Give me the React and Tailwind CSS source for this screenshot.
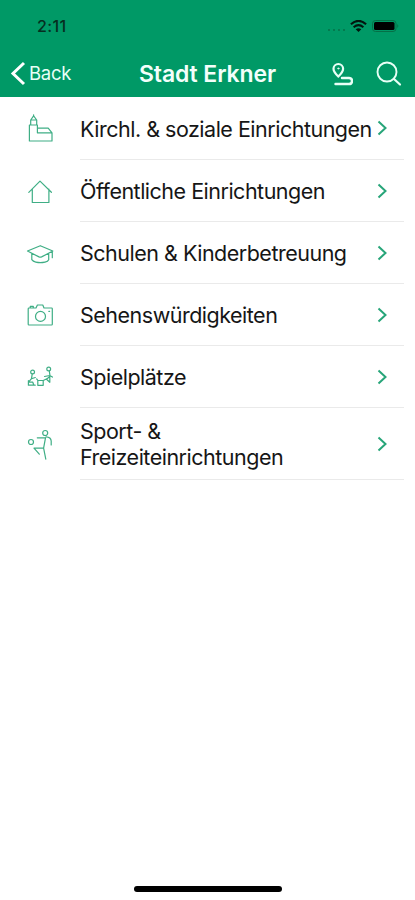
const categories = [
  { id: 'kirche', lines: ['Kirchl. & soziale Einrichtungen'], icon: ChurchIcon, height: 'h-[63px]' },
  { id: 'oeffentlich', lines: ['Öffentliche Einrichtungen'], icon: HouseIcon, height: 'h-[62px]' },
  { id: 'schule', lines: ['Schulen & Kinderbetreuung'], icon: CapIcon, height: 'h-[62px]' },
  { id: 'sehen', lines: ['Sehenswürdigkeiten'], icon: CameraIcon, height: 'h-[62px]' },
  { id: 'spiel', lines: ['Spielplätze'], icon: PlaygroundIcon, height: 'h-[62px]' },
  { id: 'sport', lines: ['Sport- &', 'Freizeiteinrichtungen'], icon: SportIcon, height: 'h-[72px]' },
]

function LineIcon({ children }) {
  return (
    <svg
      viewBox="0 0 30 30"
      className="h-[30px] w-[30px] overflow-visible"
      fill="none"
      stroke="#3fae85"
      strokeWidth="1.2"
      strokeLinecap="round"
      strokeLinejoin="round"
    >
      {children}
    </svg>
  )
}

function ChurchIcon() {
  return (
    <LineIcon>
      <path d="M5.7 11H4.4V27H27v-8.2l-3.8-4.7H12.4V11H5.7V6L8.6 1.8 11.7 6v5M5.700 6h6M12.400 14.100v4.700H27M8.600 1.800V.800" />
    </LineIcon>
  )
}

function HouseIcon() {
  return (
    <LineIcon>
      <path d="M3.800 16.300 15 5.100l11.400 11.200M7.300 13.200v13.300h16.600V13.200" />
    </LineIcon>
  )
}

function CapIcon() {
  return (
    <LineIcon>
      <path d="M2.500 13 15.300 7.700 27.800 13l-11.200 5.900q-1.300.6-2.600 0zM6.800 15.700v6q1.200 1.800 4 2.400 4.600 1 9.200 0 3-.6 3.700-2.400v-6M27.300 13.700v6" />
    </LineIcon>
  )
}

function CameraIcon() {
  return (
    <LineIcon>
      <path d="M4 8h7l1.400-3h5.400L19 8h7.500q.8 0 .8.800v15.400q0 .8-.8.800H4q-.8 0-.8-.800V8.800q0-.8.8-.8M5.300 8V6.300h3V8" />
      <circle cx="15.500" cy="16.400" r="5" />
      <path d="M23.800 11.300h.8" />
    </LineIcon>
  )
}

function PlaygroundIcon() {
  return (
    <LineIcon>
      <circle cx="7.600" cy="10" r="1.900" />
      <path d="m7.200 12.200-.7 4.500 3.800-1.200M6.500 16.700l-3 3.500h4.300l1 3M3.400 18.700v4.500h6.800" />
      <path d="M12.800 18.500h5.400v4.800h-5.400zM12.500 17.800l-.8-.8M18.300 18.500l3-1.500" />
      <circle cx="23.700" cy="7" r="1.900" />
      <path d="m24.300 9 .8 5.300-3.600 2.900M19.500 14.500l5.200-1 2.700 1.600M24.800 15.300v5M21.500 17.200l3.300 3" />
    </LineIcon>
  )
}

function SportIcon() {
  return (
    <LineIcon>
      <circle cx="20.200" cy="4" r="2.500" />
      <circle cx="6" cy="13" r="2.500" />
      <path d="M12.300 8.800h8.200l-1.900 10.400H9M21 7.800q5 .3 5.200 4.200v4M9 19.200l5.300 6M18.600 19.200l2.200 11" />
    </LineIcon>
  )
}

function StatusBar() {
  return (
    <div className="flex h-[50px] items-center justify-between pr-[15px] pl-[37px] pt-[2px]">
      <span className="text-[16px] font-medium tracking-[0.4px] text-[#062e20]">2:11</span>
      <div className="flex items-center">
        <div className="mt-[8px] mr-[5px] flex gap-[3px]">
          <i className="size-[2px] rounded-full bg-[#057047]" />
          <i className="size-[2px] rounded-full bg-[#057047]" />
          <i className="size-[2px] rounded-full bg-[#057047]" />
          <i className="size-[2px] rounded-full bg-[#057047]" />
        </div>
        <svg viewBox="0 0 17 12" className="mr-[5px] h-[12px] w-[17px]" fill="none" stroke="#02150e">
          <path d="M.9 4.200Q8.500-2.400 16.100 4.200" strokeWidth="2.100" />
          <path d="M3.600 7.200q4.900-4.200 9.800 0" strokeWidth="2" />
          <path d="m5.700 9.300 2.800 2.700 2.800-2.700q-2.800-2.200-5.600 0" fill="#02150e" stroke="none" />
        </svg>
        <svg viewBox="0 0 28 12" className="h-[12px] w-[28px]">
          <rect x=".5" y=".5" width="23.500" height="11" rx="3" fill="none" stroke="#057047" />
          <rect x="2" y="2" width="20.500" height="8" rx="1.500" fill="#000" />
          <path d="M25.300 4q2 2 0 4" fill="#057047" />
        </svg>
      </div>
    </div>
  )
}

function Header() {
  return (
    <header className="h-[97px] bg-[#009966]">
      <StatusBar />
      <div className="grid h-[48px] grid-cols-[120px_1fr_120px] items-center">
        <button className="flex items-center pl-[10px] text-[18.5px] tracking-[-0.3px] text-[#e8fff6]">
          <svg viewBox="0 0 16 26" className="mr-[3px] h-[26px] w-[16px]" fill="none" stroke="#fff" strokeWidth="3">
            <path d="M14 2 3 12.500 14 23" />
          </svg>
          Back
        </button>
        <h1 className="text-center text-[23px] font-semibold tracking-[-0.1px] whitespace-nowrap text-[#f3fffb]">
          Stadt Erkner
        </h1>
        <div className="flex items-center justify-end pr-[13px]">
          <svg viewBox="0 0 24 26" className="mr-[23px] h-[26px] w-[24px]" fill="none" stroke="#e8fff6" strokeWidth="2.2" strokeLinecap="round">
            <path d="M9.300 15.500Q4.500 11 4.500 7.800a4.800 4.800 0 0 1 9.600 0q0 3.200-4.800 7.700Z" />
            <circle cx="9.300" cy="7.500" r=".6" strokeWidth="1" />
            <path d="M13 17h7q3 0 3 3t-3 3H6.500" strokeWidth="2.400" />
          </svg>
          <svg viewBox="0 0 26 26" className="h-[26px] w-[26px]" fill="none" stroke="#e8fff6" strokeWidth="1.900" strokeLinecap="round">
            <circle cx="11" cy="11" r="9.500" />
            <path d="m18 18 6 5.500" strokeWidth="2.200" />
          </svg>
        </div>
      </div>
    </header>
  )
}

function CategoryRow({ category }) {
  const Icon = category.icon

  return (
    <li className={`flex ${category.height}`}>
      <div className="flex w-[80px] shrink-0 items-center pl-[25px]">
        <Icon />
      </div>
      <div className="mr-[11px] flex flex-1 items-center justify-between border-b border-[#eaeaea] pr-[15px]">
        <div className="pt-px text-[21.5px] leading-[26px] tracking-[-0.5px] whitespace-nowrap text-[#161616]">
          {category.lines.map((line) => (
            <p key={line}>{line}</p>
          ))}
        </div>
        <svg viewBox="0 0 14 18" className="h-[18px] w-[14px] shrink-0" fill="none" stroke="#27a579" strokeWidth="2">
          <path d="m3.500 2.500 7 6.500-7 6.500" />
        </svg>
      </div>
    </li>
  )
}

export default function App() {
  return (
    <div className="flex h-[900px] w-[415px] flex-col overflow-hidden bg-white font-['Inter',sans-serif]">
      <Header />
      <ul>
        {categories.map((category) => (
          <CategoryRow key={category.id} category={category} />
        ))}
      </ul>
      <div className="mx-auto mt-auto mb-[8px] h-[6px] w-[148px] rounded-full bg-black" />
    </div>
  )
}
